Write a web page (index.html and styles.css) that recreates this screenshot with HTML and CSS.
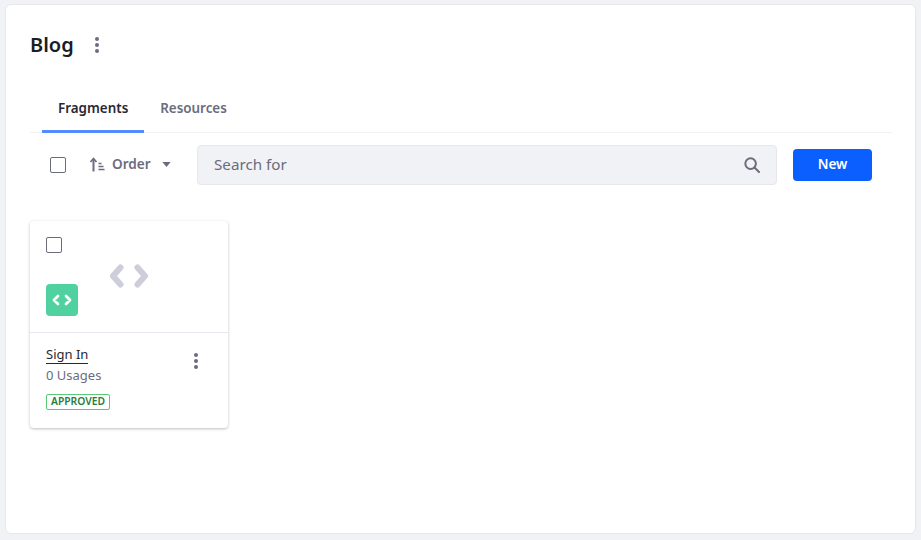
FILE: index.html
```html
<!DOCTYPE html>
<html>
<head>
<meta charset="UTF-8">
<title>Blog</title>
<link rel="stylesheet" href="styles.css">
</head>
<body>
	<div class="panel">
		<div class="head">
			<h1 class="title">Blog</h1>
			<svg class="dots" width="4" height="16" viewBox="0 0 4 16"><circle cx="2" cy="2" r="2"/><circle cx="2" cy="8" r="2"/><circle cx="2" cy="14" r="2"/></svg>
		</div>

		<div class="tabs">
			<a class="tab active">Fragments</a>
			<a class="tab">Resources</a>
		</div>

		<div class="toolbar">
			<span class="check"></span>
			<div class="order">
				<svg width="16" height="16" viewBox="0 0 16 16" fill="none" stroke="#6b6c7e"><path d="M4.500 14.500V2" stroke-width="2"/><path d="M1.500 5l3-3.500 3 3.500" stroke-width="1.700"/><path d="M9.500 6.500h3M9.500 9.500h5M9.500 12.500h6" stroke-width="1.400"/></svg>
				<span class="order-text">Order</span>
				<svg class="caret" width="9" height="5" viewBox="0 0 10 6"><path d="M0 0h10L5 6z"/></svg>
			</div>
			<div class="search">
				<span class="search-text">Search for</span>
				<svg width="16" height="16" viewBox="0 0 16 16" fill="none" stroke="#6b6c7e" stroke-width="2"><circle cx="6.600" cy="6.600" r="5.300"/><path d="M10.500 10.500L15 15" stroke-linecap="round"/></svg>
			</div>
			<button class="btn-new">New</button>
		</div>

		<div class="card">
			<div class="card-top">
				<span class="check"></span>
				<svg class="code-big" width="40" height="24" viewBox="0 0 40 24" fill="none" stroke="#cdced9" stroke-width="6" stroke-linecap="round" stroke-linejoin="round"><path d="M11.500 3.500L4 12l7.500 8.500M28.500 3.500L36 12l-7.500 8.500"/></svg>
				<span class="sticker">
					<svg width="20" height="12" viewBox="0 0 20 12" fill="none" stroke="#fff" stroke-width="2.800" stroke-linecap="round" stroke-linejoin="round"><path d="M6 2L2 6l4 4M14 2l4 4-4 4"/></svg>
				</span>
			</div>
			<div class="card-body">
				<div class="info">
					<a class="card-title">Sign In</a>
					<div class="usages">0 Usages</div>
					<span class="label">APPROVED</span>
				</div>
				<svg class="dots" width="4" height="16" viewBox="0 0 4 16"><circle cx="2" cy="2" r="2"/><circle cx="2" cy="8" r="2"/><circle cx="2" cy="14" r="2"/></svg>
			</div>
		</div>
	</div>
</body>
</html>
```
FILE: styles.css
```css
* {
	box-sizing: border-box;
}

html, body {
	height: 100%;
}

body {
	margin: 0;
	padding: 4px 5px 6px;
	background-color: #f1f2f5;
	font-family: "Noto Sans", sans-serif;
	color: #272833;
}

.panel {
	height: 530px;
	padding: 25px 23px 0 24px;
	background-color: #fff;
	border: 1px solid #e7e7ed;
	border-radius: 6px;
}

.head {
	display: flex;
	align-items: center;
	height: 30px;
	margin-bottom: 34px;
}

.title {
	margin: 0 21px 2px 0;
	font-size: 20px;
	font-weight: 600;
	color: #1c1c24;
}

.dots {
	fill: #6b6c7e;
}

.tabs {
	display: flex;
	height: 39px;
	padding-left: 12px;
	border-bottom: 1px solid #f1f2f5;
}

.tab {
	height: 39px;
	padding: 5px 16px 0;
	font-size: 13.4px;
	font-weight: 600;
	color: #6b6c7e;
}

.tab.active {
	color: #272833;
	border-bottom: 3px solid #528cff;
}

.toolbar {
	display: flex;
	align-items: center;
	height: 40px;
	margin-top: 12px;
	padding-left: 20px;
}

.check {
	display: block;
	width: 16px;
	height: 16px;
	background-color: #fff;
	border: 1px solid #6b6c7e;
	border-radius: 2px;
}

.order {
	display: flex;
	align-items: center;
	width: 131px;
	padding-left: 23px;
}

.order-text {
	margin: 0 11px 4px 7px;
	font-size: 13.6px;
	font-weight: 600;
	color: #6b6c7e;
}

.caret {
	margin-bottom: 2px;
	fill: #6b6c7e;
}

.search {
	display: flex;
	align-items: center;
	justify-content: space-between;
	width: 580px;
	height: 40px;
	padding: 0 16px;
	background-color: #f1f2f5;
	border: 1px solid #e7e7ed;
	border-radius: 4px;
}

.search-text {
	margin-bottom: 2px;
	font-size: 15.2px;
	color: #6b6c7e;
}

.btn-new {
	width: 79px;
	height: 32px;
	margin-left: 16px;
	padding: 0 0 4px;
	background-color: #0b5fff;
	border: none;
	border-radius: 4px;
	font-family: inherit;
	font-size: 13.6px;
	font-weight: 600;
	color: #fff;
}

.card {
	width: 198px;
	height: 207px;
	margin-top: 36px;
	background-color: #fff;
	border-radius: 4px;
	box-shadow: 0 1px 3px rgba(39, 40, 51, 0.3);
}

.card-top {
	position: relative;
	height: 112px;
	padding: 16px;
	border-bottom: 1px solid #e7e7ed;
}

.code-big {
	position: absolute;
	left: 79px;
	top: 43px;
}

.sticker {
	position: absolute;
	left: 16px;
	top: 63px;
	display: flex;
	align-items: center;
	justify-content: center;
	width: 32px;
	height: 32px;
	background-color: #50d2a0;
	border-radius: 4px;
}

.card-body {
	display: flex;
	justify-content: space-between;
	align-items: flex-start;
	padding: 9px 30px 0 16px;
}

.card-title {
	display: inline-block;
	font-size: 13px;
	line-height: 18px;
	color: #272833;
	border-bottom: 1px solid #272833;
}

.usages {
	margin-top: 1px;
	font-size: 13px;
	line-height: 20px;
	color: #6b6c7e;
}

.label {
	display: inline-block;
	height: 16px;
	margin-top: 9px;
	padding: 0 4px;
	border: 1px solid #5aca75;
	border-radius: 2px;
	font-size: 10.3px;
	font-weight: 600;
	line-height: 13px;
	color: #287d3c;
}

.card-body .dots {
	margin-top: 11px;
}
```
